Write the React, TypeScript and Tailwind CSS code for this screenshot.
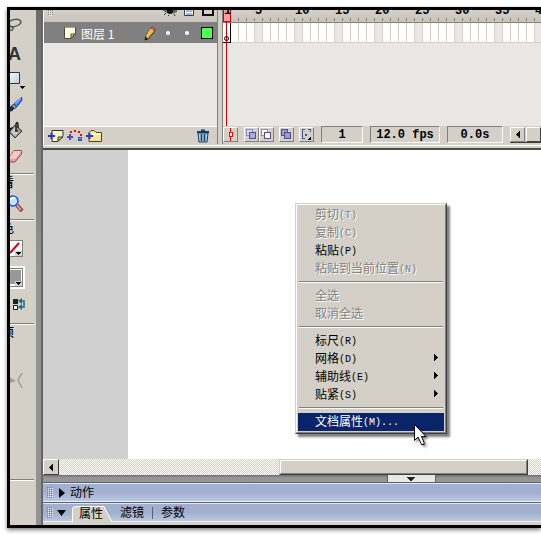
import type { ReactNode } from "react";

const CJK = "font-['Liberation_Mono','Noto_Sans_CJK_SC',monospace]";

interface MenuEntry {
    label: string;
    hotkey?: string;
    suffix?: string;
    disabled?: boolean;
    submenu?: boolean;
    active?: boolean;
}

const menuGroups: MenuEntry[][] = [
    [
        { label: "剪切", hotkey: "T", disabled: true },
        { label: "复制", hotkey: "C", disabled: true },
        { label: "粘贴", hotkey: "P" },
        { label: "粘贴到当前位置", hotkey: "N", disabled: true },
    ],
    [
        { label: "全选", disabled: true },
        { label: "取消全选", disabled: true },
    ],
    [
        { label: "标尺", hotkey: "R" },
        { label: "网格", hotkey: "D", submenu: true },
        { label: "辅助线", hotkey: "E", submenu: true },
        { label: "贴紧", hotkey: "S", submenu: true },
    ],
    [{ label: "文档属性", hotkey: "M", suffix: "...", active: true }],
];

const frames = Array.from({ length: 60 }, (_, i) => i + 1);

const Separator = () => <div className="h-[2px] w-6 shrink-0 border-t border-[#808080] bg-white" />;

const Tool = ({ label, children }: { label: string; children: ReactNode }) => (
    <button type="button" aria-label={label} className="block h-[26px] w-[26px] shrink-0 overflow-hidden">
        {children}
    </button>
);

const Section = ({ children }: { children: ReactNode }) => (
    <div className="-ml-2 h-[18px] shrink-0 whitespace-nowrap text-xs leading-[18px] font-medium text-black">{children}</div>
);

const Gripper = () => (
    <svg width="6" height="11" viewBox="0 0 6 11" shapeRendering="crispEdges" className="shrink-0">
        {[0, 2, 4, 6, 8, 10].map((y) => (
            <path key={y} d={`M0 ${y}h1v1h-1zM2 ${y}h1v1h-1zM4 ${y}h1v1h-1z`} fill="#6f7d9c" />
        ))}
        {[1, 3, 5, 7, 9].map((y) => (
            <path key={y} d={`M1 ${y}h1v1h-1zM3 ${y}h1v1h-1zM5 ${y}h1v1h-1z`} fill="#e6ebf5" />
        ))}
    </svg>
);

const Toolbar = () => (
    <aside className="flex w-[26px] shrink-0 flex-col overflow-hidden bg-[#d4d0c8] pt-[2px]">
        <Tool label="套索工具">
            <svg width="26" height="26" viewBox="0 0 26 26" fill="none" stroke="#555" strokeWidth="1.5">
                <ellipse cx="4.500" cy="11" rx="6.500" ry="3.500" transform="rotate(-14 4.500 11)" />
                <path d="M-1 12C0 16 4 14 3 17Q2 19 0 18" />
            </svg>
        </Tool>
        <Tool label="文本工具">
            <span className="-ml-[2px] block pt-1 text-left font-['Liberation_Sans',sans-serif] text-lg leading-6 font-bold text-[#333]">A</span>
        </Tool>
        <Tool label="矩形工具">
            <svg width="26" height="26" viewBox="0 0 26 26">
                <defs>
                    <linearGradient id="rectFill" x2="1" y2="1">
                        <stop stopColor="#fff" />
                        <stop offset="1" stopColor="#bccdd9" />
                    </linearGradient>
                </defs>
                <path d="M-3 8.500H9.500V19.500H-3Z" fill="url(#rectFill)" stroke="#333" />
                <path d="M10 22h5v1h-1v1h-1v1h-1v-1h-1v-1h-1z" fill="#000" shapeRendering="crispEdges" />
            </svg>
        </Tool>
        <Tool label="刷子工具">
            <svg width="26" height="26" viewBox="0 0 26 26">
                <path d="M11.500 7.500L4 14L6.500 17L12 10Z" fill="#4385ff" stroke="#0824b5" />
                <path d="M11 8.500L5 14" stroke="#b5d8ff" />
                <path d="M3.500 14L6.500 17L4.500 19L1.500 16Z" fill="#9ba5b0" stroke="#333c50" />
                <path d="M2 16C-1 16-1 19-3 20C0 23 4 21 4 18Z" fill="#172b46" />
            </svg>
        </Tool>
        <Tool label="颜料桶工具">
            <svg width="26" height="26" viewBox="0 0 26 26">
                <path d="M5 9L12 15L5 22L-1 16Z" fill="#999" stroke="#333" />
                <path d="M4 11L9 16L5 20L1 16Z" fill="#c8c8c8" />
                <path d="M6 15V8Q7 5 8 8V12M5 15h3" fill="none" stroke="#222" strokeWidth="1.500" />
                <path d="M-1 13Q2 10 4 12Q0 12 0 18L-2 18Z" fill="#111" />
            </svg>
        </Tool>
        <Tool label="橡皮擦工具">
            <svg width="26" height="26" viewBox="0 0 26 26">
                <path d="M4 8.500H11.500V12L5 20H-2V17Z" fill="#e99a9a" stroke="#925454" />
                <path d="M4 9H11L4 17H-2Z" fill="#f9c6c3" />
                <path d="M4 17L11 9" stroke="#fff0ed" />
            </svg>
        </Tool>
        <div className="h-[5px] shrink-0" />
        <Separator />
        <Section>看</Section>
        <Tool label="缩放工具">
            <svg width="26" height="26" viewBox="0 0 26 26">
                <path d="M7 12L12 18" stroke="#813f42" strokeWidth="4" />
                <path d="M7 12L11 17" stroke="#d9a5a1" strokeWidth="2" />
                <circle cx="3" cy="8" r="5" fill="#b9eaff" stroke="#2b49dc" strokeWidth="1.500" />
                <path d="M0 7Q2 4 5 5" stroke="#fff" strokeWidth="2" fill="none" />
            </svg>
        </Tool>
        <Separator />
        <Section>色</Section>
        <Tool label="笔触颜色">
            <svg width="26" height="26" viewBox="0 0 26 26" shapeRendering="crispEdges">
                <path d="M0 1H13V18H0Z" fill="#808080" />
                <path d="M0 2H12V17H0Z" fill="#fff" />
                <path d="M0 14L9 4" stroke="#d00020" strokeWidth="2" shapeRendering="auto" />
                <path d="M5 12H12V17H5Z" fill="#d4d0c8" />
                <path d="M6 13h5v1h-1v1h-1v1h-1v-1h-1v-1h-1z" />
            </svg>
        </Tool>
        <Tool label="填充颜色">
            <svg width="26" height="26" viewBox="0 0 26 26" shapeRendering="crispEdges">
                <path d="M0 1H15V24H0Z" fill="#fff" />
                <path d="M0 3H13V22H0Z" fill="#808080" />
                <path d="M0 4H12V21H0Z" fill="#fff" />
                <path d="M0 5H11V19H0Z" fill="#999" />
                <path d="M5 16H12V21H5Z" fill="#d4d0c8" />
                <path d="M6 17h5v1h-1v1h-1v1h-1v-1h-1v-1h-1z" />
            </svg>
        </Tool>
        <Tool label="交换颜色">
            <svg width="26" height="26" viewBox="0 0 26 26">
                <path d="M3 8H8V13H3Z" fill="#222" />
                <path d="M3.500 14.500H7.500V18.500H3.500Z" fill="#fff" stroke="#111" />
                <path d="M10 10H14V16H10" fill="none" stroke="#147184" strokeWidth="1.500" />
                <path d="M12 7V13L8 10ZM12 13V19L8 16Z" fill="#147184" />
            </svg>
        </Tool>
        <div className="h-[6px] shrink-0" />
        <Separator />
        <Section>项</Section>
        <div className="h-[29px] shrink-0" />
        <Tool label="贴紧至对象">
            <svg width="26" height="26" viewBox="0 0 26 26" fill="none" stroke="#a09c94">
                <path d="M0 5.500L6 9L0 11Z" fill="#a09c94" stroke="none" />
                <path d="M12 1L8 8L12 16" strokeWidth="1.500" />
            </svg>
        </Tool>
        <div className="h-[81px] shrink-0" />
        <Separator />
    </aside>
);

const PageIcon = () => (
    <svg width="14" height="14" viewBox="0 0 14 14">
        <path d="M1.500 1.500H12.500V8L8 12.500H1.500Z" fill="#fffdda" stroke="#4b4a36" />
        <path d="M8 12V8H12Z" fill="#d5d19b" stroke="#4b4a36" />
        <path d="M2 2H12" stroke="#fff" />
    </svg>
);

const LayerPane = () => (
    <div className="flex w-[173px] shrink-0 flex-col">
        <div className="flex h-[13px] items-start border-b border-[#808080] bg-gradient-to-b from-[#d4d0c8] to-[#c8c4bc] pl-1">
            <svg width="6" height="6" viewBox="0 0 6 6" shapeRendering="crispEdges">
                <path d="M0 0h1v1H0zM2 0h1v1H2zM4 0h1v1H4zM0 2h1v1H0zM2 2h1v1H2zM4 2h1v1H4zM0 4h1v1H0zM2 4h1v1H2zM4 4h1v1H4z" fill="#888" />
                <path d="M1 1h1v1H1zM3 1h1v1H3zM1 3h1v1H1zM3 3h1v1H3zM1 5h1v1H1zM3 5h1v1H3z" fill="#fff" />
            </svg>
            <svg width="60" height="7" viewBox="0 0 60 7" className="ml-auto">
                <path d="M5 0Q13 6 20 2V0Z" fill="#666" />
                <circle cx="13" cy="1" r="3" fill="#111" />
                <path d="M9 3L7 5M12 5L11 6M17 4L18 6" stroke="#333" />
                <path d="M27.500-1H36.500V5.500H27.500Z" fill="#fff" stroke="#333a58" />
                <path d="M29 1H35M29 4H35" stroke="#377dc0" />
                <path d="M34 1H36M34 4H36" stroke="#f1b82c" />
                <path d="M46-1H56V5H46Z" fill="#d4d0c8" stroke="#111" strokeWidth="2" />
            </svg>
        </div>
        <div className="flex h-5 items-center bg-[#808080] pl-[19px] text-white">
            <PageIcon />
            <span className="ml-1 pt-[2px] font-['Noto_Sans_CJK_SC',sans-serif] text-xs leading-5">图层 1</span>
            <svg width="12" height="15" viewBox="0 0 12 15" className="ml-auto">
                <path d="M8 1L11 3L10 6L4 13L1 14L2 10Z" fill="#f3b63a" stroke="#382510" />
                <path d="M7 3L2.500 10" stroke="#fff0a1" />
                <path d="M8 1L11 3L10 5L7 3Z" fill="#d95a55" />
                <path d="M1 14L1.500 11L4 13Z" fill="#111" />
            </svg>
            <span className="ml-[10px] h-1 w-1 rounded-full bg-white" />
            <span className="ml-[15px] h-1 w-1 rounded-full bg-white" />
            <span className="mr-1 ml-3 h-[12px] w-[12px] border border-black bg-[#55ff50]" />
        </div>
        <div className="min-h-[83px] flex-1 bg-[#e8e7e3]" />
        <div className="flex h-[18px] items-center border-t border-white pl-1">
            <button type="button" aria-label="插入图层">
                <svg width="16" height="14" viewBox="0 0 16 14">
                    <path d="M4 1.500H15V7L10 12.500H4Z" fill="#f7f4cf" stroke="#35342a" />
                    <path d="M10 12V8H15Z" fill="#d7d39a" stroke="#35342a" />
                    <path d="M0 7H7M3.500 4V10" stroke="#3434ba" strokeWidth="2" />
                </svg>
            </button>
            <button type="button" aria-label="添加运动引导层" className="ml-[3px]">
                <svg width="17" height="14" viewBox="0 0 17 14" shapeRendering="crispEdges">
                    <path d="M0 8H6M3 5V11" stroke="#4a4aba" strokeWidth="2" />
                    <path d="M3 2h2v2H3zM7 1h2v2H7zM11 2h2v2h-2zM13 5h2v2h-2z" fill="#f00" />
                    <path d="M11 8H15V12H11Z" fill="#2459c9" />
                    <path d="M12 9h2v1h-2z" fill="#8ebcff" />
                </svg>
            </button>
            <button type="button" aria-label="插入图层文件夹" className="ml-[2px]">
                <svg width="17" height="14" viewBox="0 0 17 14">
                    <path d="M3 3.500L5 1.500H8L10 3.500H15.500V12.500H3Z" fill="#f6e49b" stroke="#4c452b" />
                    <path d="M4 5H15" stroke="#fff9cf" strokeWidth="2" />
                    <path d="M0 7H7M3.500 4V10" stroke="#3434ba" strokeWidth="2" />
                </svg>
            </button>
            <button type="button" aria-label="删除图层" className="mr-2 ml-auto">
                <svg width="12" height="14" viewBox="0 0 12 14" fill="none" stroke="#173e64">
                    <path d="M1 4H11L10 13H2Z" fill="#a8cbe4" />
                    <path d="M0 3H12M4 1.500H8" strokeWidth="2" />
                    <path d="M4.500 5V12M7.500 5V12" strokeWidth="1.500" />
                </svg>
            </button>
        </div>
    </div>
);

const RaisedButton = ({ label, children }: { label: string; children: ReactNode }) => (
    <button
        type="button"
        aria-label={label}
        className="flex h-[15px] w-[15px] shrink-0 items-center justify-center border border-t-white border-r-[#808080] border-b-[#808080] border-l-white bg-[#d4d0c8]"
    >
        {children}
    </button>
);

const Readout = ({ className, children }: { className: string; children: ReactNode }) => (
    <output
        className={`${className} h-[17px] shrink-0 border border-t-[#808080] border-r-white border-b-white border-l-[#808080] text-center font-['Liberation_Mono',monospace] text-xs leading-[17px] font-bold whitespace-pre text-black`}
    >
        {children}
    </output>
);

const LeftArrow = () => (
    <svg width="4" height="7" viewBox="0 0 4 7" shapeRendering="crispEdges">
        <path d="M3 0h1v7H3zM2 1h1v5H2zM1 2h1v3H1zM0 3h1v1H0z" />
    </svg>
);

const FramePane = () => (
    <div className="relative flex min-w-0 flex-1 flex-col overflow-hidden border-l border-[#808080]">
        <div className="flex h-[13px] border-b border-[#808080] bg-gradient-to-b from-[#d4d0c8] to-[#c8c4bc]">
            {frames.map((n) => (
                <div key={n} className="flex h-3 w-2 shrink-0 items-start border-r border-transparent">
                    <div className={n === 1 ? "h-3 w-2 shrink-0 border border-t-0 border-[#cc0000] bg-[#ff9c9c]" : "h-3 w-2 shrink-0"}>
                        {(n === 1 || n % 5 === 0) && (
                            <span className="-mt-[6px] block font-['Liberation_Mono',monospace] text-xs leading-[14px] font-bold text-black">{n}</span>
                        )}
                    </div>
                    {n > 1 && <span className="mt-2 -ml-px h-[3px] w-px shrink-0 bg-[#808080]" />}
                </div>
            ))}
        </div>
        <div className="flex h-5">
            {frames.map((n) =>
                n === 1 ? (
                    <div key={n} className="flex h-5 w-2 shrink-0 items-end justify-center border-r border-b border-black bg-white pb-px">
                        <span className="h-[5px] w-[5px] rounded-full border border-black" />
                    </div>
                ) : (
                    <div key={n} className={`h-5 w-2 shrink-0 border-r border-b border-[#d4d0c8] ${n % 5 === 0 ? "bg-[#e8e7e3]" : "bg-white"}`} />
                ),
            )}
        </div>
        <div className="min-h-[83px] flex-1 bg-[#e8e7e3]" />
        {/* playhead */}
        <div className="absolute top-3 bottom-[18px] left-[3px] w-px bg-[#cc0000]" />
        <div className="flex h-[18px] items-start pt-px">
            <RaisedButton label="滚动到播放头">
                <svg width="9" height="13" viewBox="0 0 9 13" shapeRendering="crispEdges">
                    <path d="M4 0h1v13H4z" fill="#f00" />
                    <path d="M3 4h3v4H3z" fill="#fff" stroke="#f00" />
                </svg>
            </RaisedButton>
            <div className="ml-[6px] flex">
                <RaisedButton label="绘图纸外观">
                    <svg width="11" height="11" viewBox="0 0 11 11" shapeRendering="crispEdges" className="shrink-0">
                        <path d="M0.500 0.500h6v6h-6z" fill="#d8d8f0" stroke="#8c8cc0" />
                        <path d="M3.500 3.500h6v6h-6z" fill="#aaaae0" stroke="#4f4f92" />
                    </svg>
                </RaisedButton>
                <RaisedButton label="绘图纸外观轮廓">
                    <svg width="11" height="11" viewBox="0 0 11 11" shapeRendering="crispEdges" className="shrink-0">
                        <path d="M0.500 0.500h6v6h-6z" fill="#fff" stroke="#8c8cc0" />
                        <path d="M3.500 3.500h6v6h-6z" fill="#fff" stroke="#4f4f92" />
                    </svg>
                </RaisedButton>
            </div>
            <div className="ml-[5px] flex gap-[5px]">
                <RaisedButton label="编辑多个帧">
                    <svg width="11" height="11" viewBox="0 0 11 11" shapeRendering="crispEdges" className="shrink-0">
                        <path d="M0.500 0.500h6v6h-6z" fill="#9c9cd0" stroke="#4f4f92" />
                        <path d="M3.500 3.500h6v6h-6z" fill="#9c9cd0" stroke="#4f4f92" />
                    </svg>
                </RaisedButton>
                <RaisedButton label="修改绘图纸标记">
                    <svg width="11" height="11" viewBox="0 0 11 11" shapeRendering="crispEdges" className="shrink-0">
                        <path d="M3.500 0.500H1.500V2.500M1.500 7V9.500H3.500M7 0.500H9.500V3" fill="none" stroke="#4f4f92" />
                        <path d="M1 2h1v6H1zM4 5h2v2H4z" fill="#4f4f92" />
                        <path d="M10 7v4H6z" />
                    </svg>
                </RaisedButton>
            </div>
            <Readout className="-mt-px ml-[7px] w-[42px]">1</Readout>
            <Readout className="-mt-px ml-[7px] w-[70px]">12.0 fps</Readout>
            <Readout className="-mt-px ml-[7px] w-[56px]">0.0s</Readout>
            <div className="ml-[7px] flex min-w-0 flex-1 border-b border-[#404040]">
                <RaisedButton label="向左滚动">
                    <LeftArrow />
                </RaisedButton>
                <div className="ml-px h-[15px] flex-1 border border-[#404040] border-t-white border-l-white" />
            </div>
        </div>
    </div>
);

const Timeline = () => (
    <section className="border-b-2 border-[#4a4a4a] bg-[#d4d0c8]">
        <div className="flex border-l border-white">
            <LayerPane />
            <div className="w-[5px] shrink-0 border-l border-[#808080]" />
            <FramePane />
        </div>
        <div className="mt-px mb-[2px] h-px bg-white" />
    </section>
);

const ContextMenu = () => (
    <div
        role="menu"
        className="absolute top-[53px] left-[252px] w-[152px] border border-t-[#d4d0c8] border-r-[#404040] border-b-[#404040] border-l-[#d4d0c8] bg-[#d4d0c8] shadow-[3px_3px_2px_rgba(0,0,0,0.5)]"
    >
        <div className="border border-t-white border-r-[#808080] border-b-[#808080] border-l-white p-px">
            {menuGroups.map((group, i) => (
                <div key={i}>
                    {i > 0 && <div className="mx-px mt-[3px] mb-1 h-[2px] border-t border-[#808080] bg-white" />}
                    {group.map((item) => (
                        <button
                            key={item.label}
                            type="button"
                            role="menuitem"
                            disabled={item.disabled}
                            className={`flex h-[18px] w-full items-center pr-[6px] pl-[17px] text-xs leading-[18px] whitespace-nowrap ${
                                item.active ? "bg-[#0a246a] text-white" : item.disabled ? "text-[#808080] [text-shadow:1px_1px_0_#fff]" : "text-black"
                            }`}
                        >
                            <span className="pt-[2px]">{item.label}</span>
                            {item.hotkey && (
                                <span className="pt-[2px] text-[10px]">
                                    ({item.hotkey}){item.suffix}
                                </span>
                            )}
                            {item.submenu && (
                                <svg width="4" height="7" viewBox="0 0 4 7" shapeRendering="crispEdges" className="mb-1 ml-auto">
                                    <path d="M0 0h1v7H0zM1 1h1v5H1zM2 2h1v3H2zM3 3h1v1H3z" />
                                </svg>
                            )}
                        </button>
                    ))}
                </div>
            ))}
        </div>
        <svg width="16" height="24" viewBox="0 0 16 24" className="absolute top-[220px] left-[118px] drop-shadow-[2px_2px_1px_rgba(0,0,0,0.4)]">
            <path d="M0.500 0.500V16.500L4 13L7.500 20.500H10V18.500L7.500 12.500H12Z" fill="#fff" stroke="#000" />
        </svg>
    </div>
);

const DITHER = "bg-[repeating-conic-gradient(#d4d0c8_0%_25%,#ffffff_0%_50%)] bg-[length:2px_2px]";

const Stage = () => (
    <section className="flex flex-1 flex-col">
        <div className="relative flex min-h-[309px] flex-1">
            <div className="w-[85px] shrink-0 bg-[#d0d0d0]" />
            <div className="flex-1 bg-white" />
            <ContextMenu />
        </div>
        <div className={`flex h-4 ${DITHER}`}>
            <button
                type="button"
                aria-label="向左滚动"
                className="flex h-4 w-4 shrink-0 items-center justify-center border border-t-white border-r-[#404040] border-b-[#404040] border-l-white bg-[#d4d0c8]"
            >
                <LeftArrow />
            </button>
            <div className="mr-[13px] ml-[220px] flex-1 border border-t-[#d4d0c8] border-r-[#404040] border-b-[#404040] border-l-[#d4d0c8]">
                <div className="h-full border border-t-white border-r-[#808080] border-b-[#808080] border-l-white bg-[#d4d0c8]" />
            </div>
        </div>
        <div className="flex h-[7px] justify-center bg-gradient-to-b from-[#6e6e6e] to-[#969696] to-40% pl-[238px]">
            <button
                type="button"
                aria-label="折叠面板"
                className="flex h-[7px] w-[49px] items-center justify-center border-x border-[#606060] bg-[#e8e8e8]"
            >
                <svg width="8" height="4" viewBox="0 0 8 4" shapeRendering="crispEdges">
                    <path d="M0 0h8v1H7v1H6v1H5v1H3V3H2V2H1V1H0z" fill="#222" />
                </svg>
            </button>
        </div>
    </section>
);

const PANEL = "border-t border-[#56617c] bg-gradient-to-b from-[#a1b0cf] from-50% to-[#bdcbe3]";

const Panels = () => (
    <section className="shrink-0 text-xs text-black">
        <div className={PANEL}>
            <div className="flex h-[19px] items-center border-y border-white/70 pl-1">
                <Gripper />
                <button type="button" className="ml-[6px] flex items-center gap-[5px] leading-4">
                    <svg width="6" height="10" viewBox="0 0 6 10">
                        <path d="M0 0L6 5L0 10Z" />
                    </svg>
                    <span className="pt-[2px]">动作</span>
                </button>
            </div>
        </div>
        <div className={PANEL}>
            <div className="flex h-[19px] items-center border-y border-white/70 pl-1">
                <Gripper />
                <button type="button" aria-label="收起" className="ml-1">
                    <svg width="9" height="6" viewBox="0 0 9 6">
                        <path d="M0 0H9L4.500 6Z" />
                    </svg>
                </button>
                <div role="tablist" className="-mb-px ml-[6px] flex items-center self-end leading-4">
                    <button type="button" role="tab" aria-selected="true" className="relative h-[17px] w-[41px] pl-[7px] text-left">
                        <svg width="41" height="17" viewBox="0 0 41 17" className="absolute top-0 left-0">
                            <path d="M0 17V3L3 1H32L40 17Z" fill="#d4d0c8" />
                            <path d="M0.500 17V3L3 1.500H32L40 17" fill="none" stroke="#fff" />
                        </svg>
                        <span className="relative block pt-[2px]">属性</span>
                    </button>
                    <button type="button" role="tab" aria-selected="false" className="ml-[7px] pt-[2px]">
                        滤镜
                    </button>
                    <span className="mx-2 h-3 w-px bg-[#56617c]" />
                    <button type="button" role="tab" aria-selected="false" className="pt-[2px]">
                        参数
                    </button>
                </div>
            </div>
        </div>
        <div className="h-[3px] bg-[#d4d0c8]" />
    </section>
);

export default function App() {
    return (
        <div className={`flex min-h-screen flex-col overflow-hidden bg-white pt-[7px] pb-[7px] pl-[7px] ${CJK}`}>
            <main className="flex flex-1 border-y-[3px] border-l-[3px] border-black bg-[#d4d0c8] shadow-[0_2px_4px_rgba(0,0,0,0.5)]">
                <Toolbar />
                <div className="w-[7px] shrink-0 border-r-2 border-[#666] bg-gradient-to-b from-[#6c6c6c] to-[#929292] to-50%" />
                <div className="flex min-w-0 flex-1 flex-col">
                    <Timeline />
                    <Stage />
                    <Panels />
                </div>
            </main>
        </div>
    );
}
